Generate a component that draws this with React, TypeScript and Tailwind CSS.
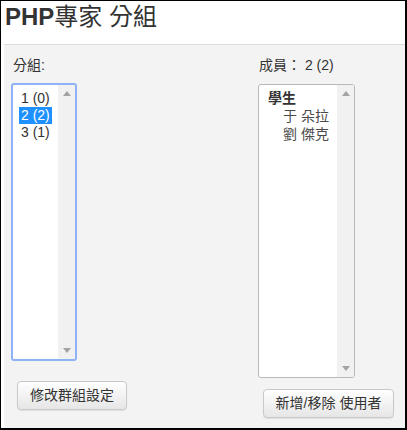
const font = { fontFamily: '"Liberation Sans", "Noto Sans CJK TC", sans-serif' };

function ScrollTrack() {
  return (
    <div className="flex w-[17px] shrink-0 flex-col items-center justify-between bg-[#f1f1f1] py-[6px]">
      <svg width="8" height="5" viewBox="0 0 8 5">
        <path d="M0 5 L4 0 L8 5 Z" fill="#a3a3a3" />
      </svg>
      <svg width="8" height="5" viewBox="0 0 8 5">
        <path d="M0 0 L8 0 L4 5 Z" fill="#a3a3a3" />
      </svg>
    </div>
  );
}

function Button({ label, className }: { label: string; className: string }) {
  return (
    <button
      className={`rounded-[4px] border border-[#c9c9c9] bg-gradient-to-b from-white to-[#e6e6e6] text-[14px] text-[#333] shadow-[0_1px_1px_rgba(0,0,0,0.08)] ${className}`}
    >
      {label}
    </button>
  );
}

export default function App() {
  const groups = ['1 (0)', '2 (2)', '3 (1)'];

  return (
    <div
      className="flex h-[430px] w-[407px] flex-col border-t border-l border-r-2 border-b-2 border-black bg-white text-[#333]"
      style={font}
    >
      {/* Header */}
      <div className="h-[43px] pl-[4px] pt-[2px] text-[24px] leading-[28px] text-[#333]">
        <span className="font-bold">PHP</span>專家 分組
      </div>

      {/* Panel */}
      <div className="ml-[3px] flex flex-1 border-t border-[#dcdcdc] bg-[#f3f3f3] pl-[7px] pt-[12px] text-[14px]">
        {/* Groups column */}
        <div className="flex w-[247px] flex-col">
          <div className="pl-[2px] leading-[17px]">分組:</div>
          <div className="mt-[9px] flex h-[278px] w-[66px] overflow-hidden rounded-[3px] border-2 border-[#8fb2f6] bg-white">
            <div className="flex-1 pl-[6px] pt-[5px] leading-[17px]">
              {groups.map((g, i) => (
                <div key={g}>
                  <span
                    className={
                      i === 1
                        ? 'block w-fit bg-[#1e90ff] px-[2px] text-white'
                        : 'block w-fit px-[2px] text-[#333]'
                    }
                  >
                    {g}
                  </span>
                </div>
              ))}
            </div>
            <ScrollTrack />
          </div>
          <Button label="修改群組設定" className="ml-[6px] mt-[20px] h-[29px] w-[110px]" />
        </div>

        {/* Members column */}
        <div className="flex flex-col">
          <div className="pl-[1px] leading-[17px]">成員： 2 (2)</div>
          <div className="mt-[10px] flex h-[294px] w-[97px] overflow-hidden rounded-[3px] border border-[#b9b9b9] bg-white">
            <div className="flex-1 pl-[9px] pt-[4px] leading-[18px]">
              <div className="font-bold text-[#333]">學生</div>
              <div className="pl-[15px] text-[#4a4a4a]">于 朵拉</div>
              <div className="pl-[15px] text-[#4a4a4a]">劉 傑克</div>
            </div>
            <ScrollTrack />
          </div>
          <Button label="新增/移除 使用者" className="ml-[5px] mt-[11px] h-[29px] w-[131px]" />
        </div>
      </div>
    </div>
  );
}
